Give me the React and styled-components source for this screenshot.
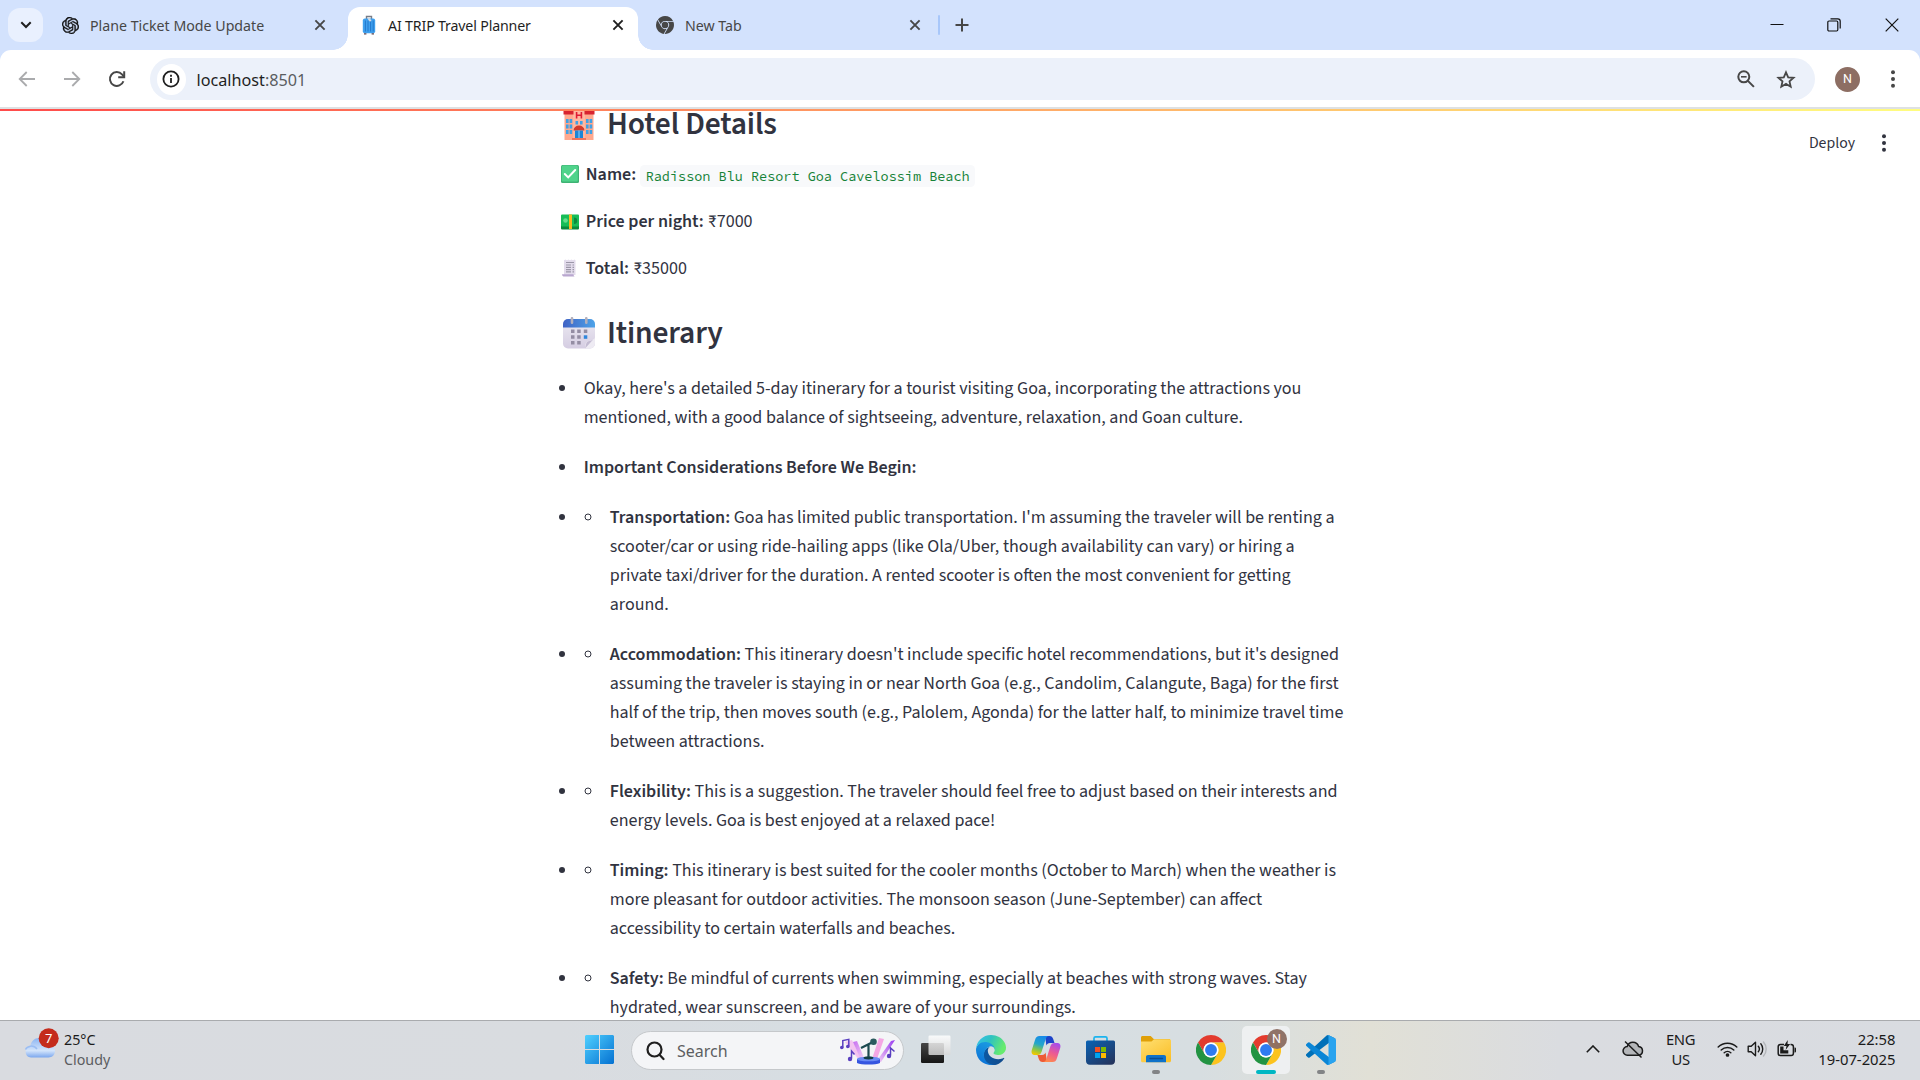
import React from "react";
import styled, { createGlobalStyle } from "styled-components";
import { SiOpenai, SiGooglechrome } from "react-icons/si";

const UI_FONT = '"Segoe UI", "Noto Sans", "Open Sans", sans-serif';
const PAGE_FONT = '"Source Sans 3", "Source Sans Pro", "Noto Sans CJK SC", sans-serif';
const CODE_FONT = '"Source Code Pro", "DejaVu Sans Mono", monospace';

const GlobalStyle = createGlobalStyle`
  * { box-sizing: border-box; }
  body { margin: 0; background: #fff; overflow: hidden; }
  svg { display: block; flex: none; }
`;

const Desktop = styled.div`
  display: flex;
  flex-direction: column;
  width: 1920px;
  height: 1080px;
  overflow: hidden;
  font-family: ${UI_FONT};
`;

/* ---------- browser window ---------- */

const TabStrip = styled.div`
  display: flex;
  flex: none;
  height: 50px;
  padding-left: 8px;
  background: #d3e2fd;
  color: #474747;
`;

const TabSearch = styled.div`
  display: grid;
  place-items: center;
  width: 35px;
  height: 34px;
  margin: 8px 5px 0 0;
  border-radius: 12px;
  background: #e9f0fe;
`;

const Tab = styled.div`
  position: relative;
  display: flex;
  align-items: center;
  width: ${(p) => p.$width}px;
  height: 43px;
  margin-top: 7px;
  padding: 0 ${(p) => p.$right}px 7px ${(p) => p.$left}px;
  border-radius: 12px 12px 0 0;
  background: ${(p) => (p.$active ? "#fff" : "transparent")};
  color: ${(p) => (p.$active ? "#1f1f1f" : "#474747")};

  &::before,
  &::after {
    content: "";
    display: ${(p) => (p.$active ? "block" : "none")};
    position: absolute;
    bottom: 0;
    width: 15px;
    height: 15px;
  }
  &::before {
    right: 100%;
    background: radial-gradient(circle at 0 0, transparent 14.5px, #fff 15px);
  }
  &::after {
    left: 100%;
    background: radial-gradient(circle at 100% 0, transparent 14.5px, #fff 15px);
  }
`;

const TabIcon = styled.span`
  display: grid;
  place-items: center;
  width: 20px;
  height: 20px;
  margin-right: ${(p) => p.$gap}px;
`;

const TabTitle = styled.span`
  flex: 1;
  padding-top: 1px;
  font-size: 14.2px;
  line-height: 20px;
  letter-spacing: ${(p) => p.$spacing || 0}px;
  white-space: nowrap;
`;

const TabDivider = styled.div`
  width: 2px;
  height: 20px;
  margin: 15px 14.5px 0 0;
  border-radius: 1px;
  background: #a8c7fa;
`;

const StripButton = styled.div`
  display: flex;
  align-items: center;
  height: 50px;
`;

const WindowControls = styled.div`
  display: flex;
  align-items: center;
  gap: 43.5px;
  height: 49px;
  margin-left: auto;
  padding-right: 21.5px;
`;

const ToolbarBack = styled.div`
  flex: none;
  background: #d3e2fd;
`;

const Toolbar = styled.div`
  display: flex;
  align-items: center;
  height: 59px;
  padding: 1px 18.5px 0 16px;
  border-bottom: 2px solid #dee1e3;
  border-radius: 11px 11px 0 0;
  background: #fff;
`;

const NavButton = styled.div`
  display: grid;
  place-items: center;
  width: 22px;
  height: 22px;
  margin-right: ${(p) => p.$gap}px;
`;

const AddressBar = styled.div`
  display: flex;
  align-items: center;
  flex: 1;
  height: 42px;
  padding: 0 19px 0 6.5px;
  border-radius: 21px;
  background: #ecf1fa;
`;

const SiteInfo = styled.div`
  display: grid;
  place-items: center;
  width: 29px;
  height: 31px;
  border-radius: 50%;
  background: #fff;
`;

const Url = styled.div`
  flex: 1;
  padding-top: 1px;
  margin-left: 11px;
  font-size: 16.2px;
  line-height: 22px;
  color: #1f1f1f;

  span { color: #5a5d61; }
`;

const AddressActions = styled.div`
  display: flex;
  align-items: center;
  gap: 21px;
`;

const ToolbarEnd = styled.div`
  display: flex;
  align-items: center;
  gap: 29.5px;
  margin: 0 6px 0 20px;
`;

const Avatar = styled.div`
  display: grid;
  place-items: center;
  width: ${(p) => p.$size}px;
  height: ${(p) => p.$size}px;
  border-radius: 50%;
  background: #8d6e63;
  color: #fff;
  font-family: Roboto, ${UI_FONT};
  font-size: 12.5px;
  line-height: 1;
`;

/* ---------- page ---------- */

const Page = styled.main`
  position: relative;
  flex: 1;
  overflow: hidden;
  background: #fff;
  color: #31333f;
  font-family: ${PAGE_FONT};
  font-size: 18px;
  line-height: 28.8px;
`;

const Decoration = styled.div`
  position: absolute;
  inset: 0 0 auto;
  height: 2px;
  background: linear-gradient(90deg, #ff4b4b, #fffd80);
`;

const AppHeader = styled.div`
  position: absolute;
  top: 20px;
  right: 33px;
  display: flex;
  align-items: center;
  gap: 26px;
  height: 28px;
  font-size: 15.75px;
`;

const Content = styled.div`
  width: 788.5px;
  margin-left: 557.6px;
`;

const Heading = styled.h2`
  display: flex;
  align-items: center;
  gap: 12px;
  margin: ${(p) => p.$margin};
  padding-left: 5.4px;
  font-size: 31.5px;
  font-weight: 600;
  line-height: 38px;
  letter-spacing: -0.16px;

  svg { margin-bottom: 2px; }
`;

const Detail = styled.p`
  display: flex;
  align-items: center;
  height: 28.8px;
  margin: 0 0 18px;
  padding-left: 3.4px;

  svg { margin: -2px 6.8px 0 0; }
  strong { margin-right: 4.1px; font-weight: 600; }
`;

const Code = styled.code`
  height: 22px;
  margin-top: 2px;
  padding: 0 5.4px;
  border-radius: 4.5px;
  background: #f8f9fb;
  color: #158237;
  font-family: ${CODE_FONT};
  font-size: 13.5px;
  line-height: 23px;
`;

const List = styled.ul`
  margin: 0;
  padding: 0;
  list-style: ${(p) => (p.$nested ? "circle" : "disc")};
`;

const Item = styled.li`
  margin: 0 0 ${(p) => (p.$nested ? 0 : 21.6)}px 20.7px;
  padding-left: 5.4px;

  strong { font-weight: 600; }
`;

/* ---------- taskbar ---------- */

const Taskbar = styled.footer`
  display: flex;
  flex: none;
  height: 60px;
  border-top: 1px solid #a9abae;
  background: linear-gradient(
    90deg,
    #d9dbe0 0,
    #d9dce0 560px,
    #d6dee3 900px,
    #d7dee1 1200px,
    #e1e0d6 1370px,
    #dadce0 1560px,
    #d9dce1 1920px
  );
`;

const Weather = styled.div`
  display: flex;
  width: 572px;
  padding: 9px 0 0 24px;
  font-size: 14.3px;
  line-height: 20px;
  color: #1b1b1b;

  svg { margin: -4px 5px 0 0; }
`;

const Muted = styled.div`
  color: #5c5d60;
`;

const Slot = styled.div`
  display: flex;
  flex-direction: column;
  align-items: center;
  justify-content: space-between;
  width: ${(p) => (p.$active ? 48 : 55)}px;
  height: 48px;
  margin: 5px ${(p) => (p.$active ? 3.5 : 0)}px 0;
  padding-top: 9px;
  border-radius: 5px;
  background: ${(p) => (p.$active ? "#eef0f1" : "transparent")};
`;

const IconStack = styled.div`
  position: relative;
`;

const Badge = styled.div`
  position: absolute;
  top: -6px;
  left: 16px;
  opacity: 0.96;
`;

const Indicator = styled.div`
  width: ${(p) => (p.$active ? 20 : 8)}px;
  height: 4px;
  border-radius: 2px;
  background: ${(p) => (p.$active ? "#00b7c3" : "#828486")};
`;

const SearchBox = styled.div`
  display: flex;
  align-items: center;
  width: 273px;
  height: 39px;
  margin: 10px 4px 0 4px;
  padding: 0 7px 0 14px;
  border: 1px solid #c5c8cb;
  border-radius: 20px;
  background: #f4f5f7;
  color: #5d5e61;
  font-size: 16px;
  line-height: 22px;

  span { flex: 1; margin-left: 12px; }
`;

const Tray = styled.div`
  display: flex;
  align-items: center;
  margin-left: auto;
  padding: 0 24.5px 4px 0;
  color: #1b1b1b;
  font-size: 14.8px;
  line-height: 20px;
`;

const TrayItem = styled.div`
  margin-left: ${(p) => p.$gap}px;
  text-align: ${(p) => p.$align || "center"};
  letter-spacing: ${(p) => p.$spacing || 0}px;
`;

/* ---------- icons ---------- */

const Cross = ({ color }) => (
  <svg width="12" height="12" viewBox="0 0 12 12" stroke={color} strokeWidth="1.9">
    <path d="M1.4 1.4l9.2 9.2M10.6 1.4l-9.2 9.2" />
  </svg>
);

const Dots = ({ color }) => (
  <svg width="6" height="20" viewBox="0 0 6 20" fill={color}>
    <circle cx="3" cy="3.2" r="2" />
    <circle cx="3" cy="10" r="2" />
    <circle cx="3" cy="16.8" r="2" />
  </svg>
);

const Arrow = ({ flip }) => (
  <svg width="18" height="18" viewBox="0 0 18 18" fill="none" stroke="#aaabad" strokeWidth="1.8">
    <path d={flip ? "M1 9h15M9.3 2l7 7-7 7" : "M17 9H2M8.7 2l-7 7 7 7"} />
  </svg>
);

const Reload = () => (
  <svg width="18" height="18" viewBox="0 0 18 18" fill="none" stroke="#474747" strokeWidth="2">
    <path d="M15.4 11.2A6.9 6.9 0 1 1 14 4.4l2 2.2" />
    <path d="M16.2 1.2v6h-6" />
  </svg>
);

const Luggage = () => (
  <svg width="14" height="20" viewBox="0 0 14 20">
    <path d="M4.5 5V1.500h5V5" fill="none" stroke="#777d88" strokeWidth="1.4" />
    <rect x=".8" y="3.6" width="12.4" height="14.6" rx="2" fill="#3fa0ee" />
    <path d="M3.4 5.5v11M6 5.5v11M8.6 5.5v11M11.2 5.500v11" stroke="#1b6fc4" strokeWidth=".8" />
    <path d="M6.5 2.6l3 2.6-1.4 1.6-2-2z" fill="#d9dce2" />
    <path d="M2 18.2h2.4v1.4H2zM9.6 18.2H12v1.4H9.6z" fill="#5a4550" />
  </svg>
);

const Hotel = () => (
  <svg width="32" height="34" viewBox="0 0 32 34">
    <rect x="1.5" y="5" width="29" height="28" fill="#ffa98f" />
    <rect x="10" y="1" width="12" height="32" fill="#ffb7a0" />
    <path d="M.5 4h10v3.4H.5zM21.5 4h10v3.4h-10z" fill="#d8242f" />
    <path d="M13.6 5v6.4M18.4 5v6.4M13.6 8.2h4.8" stroke="#e01b35" strokeWidth="1.6" />
    <g fill="#3fa2e6">
      <path d="M3 12h2.6v4H3zM6.6 12h2.6v4H6.6zM3 17.5h2.6v4H3zM6.6 17.5h2.6v4H6.6zM3 23h2.6v4H3zM6.6 23h2.6v4H6.6z" />
      <path d="M23 12h2.6v4H23zM26.6 12h2.6v4h-2.6zM23 17.5h2.6v4H23zM26.6 17.5h2.6v4h-2.6zM23 23h2.6v4H23zM26.6 23h2.6v4h-2.6z" />
      <path d="M12.5 14h2.6v3.5h-2.6zM17 14h2.6v3.5H17z" />
    </g>
    <path d="M10.5 23.5a5.5 5 0 0 1 11 0z" fill="#d23a2d" />
    <path d="M12 23.5h8V31h-8z" fill="#1d86d6" />
    <path d="M16 23.5V31" stroke="#8fd0ff" strokeWidth="1" />
    <path d="M9 31h14v2H9z" fill="#f0745c" />
  </svg>
);

const Check = () => (
  <svg width="18" height="18" viewBox="0 0 18 18">
    <rect width="18" height="18" rx="1.5" fill="#3fb374" />
    <rect x=".8" y=".5" width="16" height="16" rx="1.5" fill="#50d38b" />
    <path d="M3.8 9l3.4 3.4 7-7.4" fill="none" stroke="#fff" strokeWidth="2" strokeLinecap="round" />
  </svg>
);

const Cash = () => (
  <svg width="18" height="18" viewBox="0 0 18 18">
    <rect y="3.5" width="18" height="14" rx="1" fill="#0b8a3c" />
    <rect y="2.5" width="18" height="12" rx="1" fill="#18bd57" />
    <circle cx="4.5" cy="8.5" r="2.3" fill="#67dd8c" />
    <path d="M13 5.5a3.2 3.2 0 0 1 0 6.4z" fill="#0b8a3c" />
    <path d="M8 2.5h3V17H8z" fill="#f8b91f" />
  </svg>
);

const Receipt = () => (
  <svg width="18" height="18" viewBox="0 0 18 18">
    <path d="M3 1.2l1.5-.8 1.5.8 1.5-.8 1.5.8 1.5-.8 1.5.8 1.5-.8 1 .8V16H3z" fill="#e3dcec" />
    <path d="M1 15.2h11.5c0 1.5.8 2.4 2 2.4H3.5C2 17.6 1 16.8 1 15.2z" fill="#b9a7cf" />
    <path d="M5 3.5h8M5 6h5M11.5 6H13M5 8.3h5M11.5 8.3H13M5 10.6h5M11.5 10.6H13M5 12.9h5M11.5 12.9H13" stroke="#9c97a8" strokeWidth="1.2" />
  </svg>
);

const Calendar = () => (
  <svg width="32" height="32" viewBox="0 0 32 32">
    <defs>
      <linearGradient id="calTop"><stop stopColor="#3f62c4" /><stop offset="1" stopColor="#4ea3e8" /></linearGradient>
      <linearGradient id="calBody" x2="0" y2="1"><stop stopColor="#eceaf2" /><stop offset="1" stopColor="#d5cde2" /></linearGradient>
    </defs>
    <rect y="2.5" width="32" height="29" rx="5" fill="url(#calBody)" />
    <path d="M0 10.5V7a5 5 0 0 1 5-5h22a5 5 0 0 1 5 5v3.5z" fill="url(#calTop)" />
    <path d="M9 1.2v4.6M23.3 1.2v4.6" stroke="#b3b0bd" strokeWidth="2.6" strokeLinecap="round" />
    <path d="M8 12.5h3.5V16H8zM14.2 12.5h3.5V16h-3.5zM20.8 12.5h3.5V16h-3.5zM8 18.3h3.5v3.5H8zM14.2 18.3h3.5v3.5h-3.5zM8 24h3.5v3.5H8zM14.2 24h3.5v3.5h-3.5z" fill="#948da3" />
    <path d="M20.8 18.3h3.5v3.5h-3.5z" fill="#2f86dc" />
    <path d="M22 31.5c0-2 .5-5.5 1.5-6.5s6-1 8.5-4.5V26c0 3-2 5.5-5 5.5z" fill="#eeebf3" />
    <path d="M22 31.5c1-3 1-5.5 2-6.5s6-1 8-4.5z" fill="#c3bbd2" />
  </svg>
);

const WeatherIcon = () => (
  <svg width="35" height="32" viewBox="0 0 35 32">
    <defs>
      <linearGradient id="cloud" x2="0" y2="1"><stop stopColor="#8db5f2" /><stop offset=".65" stopColor="#d3e4fb" /><stop offset="1" stopColor="#7ba7ee" /></linearGradient>
    </defs>
    <path d="M7 31.5a5.8 5.8 0 0 1-.6-11.5C7 15.5 10.5 12 15 12c4.2 0 7.5 2.8 8.5 6.5 4.5 0 7.5 2.8 7.5 6.5s-2.8 6.5-6.5 6.5z" fill="url(#cloud)" />
    <path d="M1.5 23.5c1.5-3.8 8-5 11.5-.5" fill="none" stroke="#9bbdf3" strokeWidth="1.5" />
    <circle cx="24.7" cy="12.2" r="10" fill="#c42b1c" />
    <text x="24.7" y="17" textAnchor="middle" fontSize="13" fontFamily="Noto Sans" fill="#fff">7</text>
  </svg>
);

const StartIcon = () => (
  <svg width="29" height="29" viewBox="0 0 29 29">
    <defs>
      <linearGradient id="win" x2="1" y2="1"><stop stopColor="#4fd0ff" /><stop offset="1" stopColor="#0571d1" /></linearGradient>
    </defs>
    <path d="M1 0h13v14H0V1zM15 0h13l1 1v13H15zM0 15h14v14H1l-1-1zM15 15h14v13l-1 1H15z" fill="url(#win)" />
  </svg>
);

const Glass = () => (
  <svg width="19" height="20" viewBox="0 0 19 20" fill="none" stroke="#1f1f1f" strokeWidth="2.2" strokeLinecap="round">
    <circle cx="8.5" cy="8.5" r="7" />
    <path d="M13.5 13.8l4 4.2" />
  </svg>
);

const Karaoke = () => (
  <svg width="56" height="28" viewBox="0 0 56 28">
    <defs>
      <linearGradient id="beamL" x2="1" y2="1"><stop stopColor="#c66cf0" /><stop offset="1" stopColor="#f7dcf6" /></linearGradient>
      <linearGradient id="beamR" x1="1" x2="0" y2="1"><stop stopColor="#9a3df0" /><stop offset="1" stopColor="#f6d3f4" /></linearGradient>
    </defs>
    <path d="M12 3l10 20h-3L5 5z" fill="#f3c3f0" />
    <path d="M13 5l4-1 8 19h-4z" fill="url(#beamL)" />
    <path d="M39 1l5 1-8 23h-5z" fill="#f5a8e4" />
    <path d="M55 3L41 25h-5L51 4z" fill="url(#beamR)" />
    <path d="M17 22h23v4c-4 2-19 2-23 0z" fill="#3656e0" />
    <ellipse cx="28.5" cy="22" rx="11.5" ry="2.3" fill="#6b8cf5" />
    <ellipse cx="28.5" cy="20.8" rx="5" ry="1.6" fill="#123f45" />
    <path d="M28.5 20V8M21 11l11-5.5" stroke="#1c4a50" strokeWidth="2.2" />
    <circle cx="33.5" cy="4.8" r="3.3" fill="#2c5b5f" />
    <g fill="none" stroke="#5a3fc0" strokeWidth="1.5">
      <path d="M2.8 10.5v-7l6-1.200v7M11.5 21.5V14l3 3.5M50.5 18.5V11l4 3.5" />
    </g>
    <g fill="#5a3fc0">
      <circle cx="1.8" cy="10.5" r="1.8" /><circle cx="7.8" cy="9.5" r="1.8" />
      <circle cx="10" cy="22" r="2.2" /><circle cx="49" cy="19" r="2.2" />
    </g>
  </svg>
);

const TaskView = () => (
  <svg width="30" height="29" viewBox="0 0 30 29">
    <defs>
      <linearGradient id="tvDark" x2="0" y2="1"><stop stopColor="#454545" /><stop offset="1" stopColor="#161616" /></linearGradient>
      <linearGradient id="tvLight" x2="0" y2="1"><stop stopColor="#fff" /><stop offset="1" stopColor="#d8d8d8" /></linearGradient>
    </defs>
    <rect y="8" width="23" height="20" rx="1.2" fill="url(#tvDark)" />
    <rect x="7.5" y=".5" width="22" height="19.5" rx="1.2" fill="url(#tvLight)" opacity=".84" />
  </svg>
);

const Edge = () => (
  <svg width="30" height="30" viewBox="0 0 256 256">
    <defs>
      <linearGradient id="edgeA" x1="0" x2="1"><stop stopColor="#0c59a4" /><stop offset="1" stopColor="#114a8b" /></linearGradient>
      <linearGradient id="edgeB" x1=".6" x2=".2" y2="1"><stop stopColor="#1b9de2" /><stop offset="1" stopColor="#0a6fd6" /></linearGradient>
      <linearGradient id="edgeC" x1="0" x2="1" y2=".35"><stop stopColor="#35c1f1" /><stop offset=".5" stopColor="#2fc2c0" /><stop offset="1" stopColor="#66eb6e" /></linearGradient>
    </defs>
    <path fill="url(#edgeA)" d="M235.7 195.5a93.7 93.7 0 0 1-10.6 4.7 101.9 101.9 0 0 1-35.9 6.4c-47.3 0-88.5-32.5-88.5-74.3a31.5 31.5 0 0 1 16.4-27.3c-42.8 1.8-53.8 46.4-53.8 72.5 0 74 68.1 81.4 82.8 81.4 7.9 0 19.8-2.3 27-4.6l1.3-.4a128.3 128.3 0 0 0 66.6-52.8 4 4 0 0 0-5.3-5.6z" />
    <path fill="url(#edgeB)" d="M105.7 241.4a79.2 79.2 0 0 1-22.7-21.3 80.7 80.7 0 0 1 29.5-120c3.2-1.5 8.5-4.1 15.6-4a32.4 32.4 0 0 1 25.7 13 31.9 31.9 0 0 1 6.3 18.7c0-.2 24.5-79.6-80-79.6-43.9 0-80 41.6-80 78.2a130.2 130.2 0 0 0 12.1 56 128 128 0 0 0 156.4 67 75.5 75.5 0 0 1-62.8-8z" />
    <path fill="url(#edgeC)" d="M152.3 148.9c-.8 1-3.3 2.5-3.3 5.7 0 2.6 1.7 5.1 4.7 7.2 14.4 10 41.5 8.7 41.6 8.7 10.7 0 21.1-3 30.3-8.4A61.4 61.4 0 0 0 256 109.3c.3-22.4-8-37.3-11.3-43.9C223.5 23.9 177.7 0 128 0A128 128 0 0 0 0 126.2c.5-36.5 36.8-66 80-66 3.5 0 23.5.3 42 10 16.3 8.6 24.9 19 30.8 29.2 6.2 10.7 7.3 24.1 7.3 29.5 0 5.3-2.7 13.3-7.8 20z" />
  </svg>
);

const Copilot = () => (
  <svg width="30" height="28" viewBox="0 0 30 28">
    <defs>
      <linearGradient id="copA" x1=".6" x2=".3" y2="1"><stop stopColor="#1689ea" /><stop offset=".45" stopColor="#24a7c9" /><stop offset=".75" stopColor="#8bc646" /><stop offset="1" stopColor="#f2c800" /></linearGradient>
      <linearGradient id="copB" x1=".7" x2=".3" y2="1"><stop stopColor="#a64bea" /><stop offset=".5" stopColor="#ec5a93" /><stop offset="1" stopColor="#ff8b4c" /></linearGradient>
    </defs>
    <path d="M14 1h4.5c2 0 3 1 3.7 3l1.3 4H19c-2 0-3 1-3.6 2.5z" fill="#1c43c9" />
    <path d="M16 27h-4.5c-2 0-3-1-3.7-3l-1.3-4H11c2 0 3-1 3.6-2.5z" fill="#ee5b35" />
    <path d="M8.5 1H18c-2 0-2.8 1.5-3.5 3.5l-3.8 12C10 19 8.5 20 6.5 20H3.8C1 20 0 17.8.8 15L4 5C5 2 6 1 8.5 1z" fill="url(#copA)" />
    <path d="M21.5 27H12c2 0 2.8-1.5 3.5-3.5l3.8-12C20 9 21.5 8 23.5 8h2.7c2.8 0 3.8 2.2 3 5L26 23c-1 3-2 4-4.5 4z" fill="url(#copB)" />
  </svg>
);

const Store = () => (
  <svg width="29" height="30" viewBox="0 0 29 30">
    <defs>
      <linearGradient id="store" x2=".8" y2="1"><stop stopColor="#0a63b5" /><stop offset="1" stopColor="#24355f" /></linearGradient>
    </defs>
    <path d="M8 6V3.2C8 2.3 8.6 1.8 9.5 1.8h10c.9 0 1.5.5 1.5 1.4V6" fill="none" stroke="#1cb4ee" strokeWidth="1.7" />
    <path d="M0 7a1.5 1.5 0 0 1 1.5-1.5h26A1.5 1.5 0 0 1 29 7v19c0 2.2-1.6 3.8-3.8 3.8H3.8C1.6 29.8 0 28.2 0 26z" fill="url(#store)" />
    <path d="M9 12h5v5H9z" fill="#f25022" /><path d="M15 12h5v5h-5z" fill="#7fba00" />
    <path d="M9 18h5v5H9z" fill="#00a4ef" /><path d="M15 18h5v5h-5z" fill="#ffb900" />
  </svg>
);

const Explorer = () => (
  <svg width="30" height="28" viewBox="0 0 30 28">
    <defs>
      <linearGradient id="folder" x2=".8" y2="1"><stop stopColor="#ffdf72" /><stop offset="1" stopColor="#fbc02a" /></linearGradient>
    </defs>
    <path d="M0 2.5C0 1.7.6 1 1.5 1h8.2l3 3H29v7H0z" fill="#e0a008" />
    <path d="M0 6.5h10.5L13 4.3h15.5c.9 0 1.5.6 1.5 1.5v20c0 .9-.6 1.5-1.5 1.5h-27c-.9 0-1.5-.6-1.5-1.5z" fill="url(#folder)" />
    <path d="M5 27.3V22c0-1.3.8-2 2-2h16c1.2 0 2 .7 2 2v5.3z" fill="#0f72c9" />
    <path d="M9 23.5h12.5" stroke="#0a4e93" strokeWidth="1.4" strokeLinecap="round" />
  </svg>
);

const Chrome = () => (
  <svg width="30" height="30" viewBox="0 0 48 48">
    <path fill="#e33b2e" d="M24 12h20.781A23.994 23.994 0 0 0 3.218 12.003L13.608 30A11.985 11.985 0 0 1 24 12z" />
    <path fill="#fcc31e" d="M34.391 30.003L24 48a23.994 23.994 0 0 0 20.78-35.997H24a11.985 11.985 0 0 1 10.391 18z" />
    <path fill="#229342" d="M13.609 30.003L3.218 12.006A23.994 23.994 0 0 0 24.003 48l10.39-17.997a11.985 11.985 0 0 1-20.784 0z" />
    <circle cx="24" cy="24" r="12" fill="#fff" />
    <circle cx="24" cy="24" r="9.5" fill="#2f7bf0" />
  </svg>
);

const VsCode = () => (
  <svg width="30" height="30" viewBox="0 0 100 100">
    <path fill="#0070b8" d="M96.46 10.8L75.86.88a6.23 6.23 0 0 0-7.11 1.2L1.3 63.58a4.17 4.17 0 0 0 0 6.17l5.51 5a4.17 4.17 0 0 0 5.32.24L93.36 13.37C96.09 11.3 100 13.25 100 16.67v-.24a6.25 6.25 0 0 0-3.54-5.63z" />
    <path fill="#0b86d6" d="M96.46 89.2l-20.6 9.92a6.23 6.23 0 0 1-7.11-1.2L1.3 36.42a4.17 4.17 0 0 1 0-6.17l5.51-5a4.17 4.17 0 0 1 5.32-.24l81.23 61.62c2.73 2.07 6.64.12 6.64-3.3v.24a6.25 6.25 0 0 1-3.54 5.63z" />
    <path fill="#29a3ef" d="M75.86 99.13a6.23 6.23 0 0 1-7.11-1.21c2.31 2.3 6.25.67 6.25-2.59V4.67c0-3.26-3.94-4.89-6.25-2.59A6.23 6.23 0 0 1 75.86.87l20.6 9.91A6.25 6.25 0 0 1 100 16.41v67.18a6.25 6.25 0 0 1-3.54 5.63z" />
  </svg>
);

const CloudOff = () => (
  <svg width="22" height="20" viewBox="0 0 22 20" fill="none" stroke="#1b1b1b" strokeWidth="1.5">
    <path d="M5.5 16.2a4.3 4.3 0 0 1-.3-8.6A6 6 0 0 1 16.6 7.4a4.45 4.45 0 0 1 .2 8.8z" fill="#b4b6b9" />
    <path d="M3 2.5l16.5 16" />
  </svg>
);

const Wifi = () => (
  <svg width="21" height="16" viewBox="0 0 21 16" fill="none" stroke="#1b1b1b" strokeWidth="1.5" strokeLinecap="round">
    <path d="M1.2 6a13.2 13.2 0 0 1 18.6 0M4.2 9a9 9 0 0 1 12.6 0M7.2 11.8a4.8 4.8 0 0 1 6.6 0" />
    <circle cx="10.5" cy="14" r="1.1" fill="#1b1b1b" />
  </svg>
);

const Speaker = () => (
  <svg width="21" height="18" viewBox="0 0 21 18" fill="none" stroke="#1b1b1b" strokeWidth="1.4" strokeLinecap="round" strokeLinejoin="round">
    <path d="M1.2 6.3h3l4.3-4v13.4l-4.3-4h-3z" />
    <path d="M11.3 6.2a4.5 4.5 0 0 1 0 5.6M13.8 3.8a8 8 0 0 1 0 10.4" />
    <path d="M16.5 2a10.5 10.5 0 0 1 0 14" stroke="#b4b6ba" />
  </svg>
);

const Battery = () => (
  <svg width="20" height="18" viewBox="0 0 20 18">
    <path d="M7 4.5H3.5a2.3 2.3 0 0 0-2.3 2.3v6.4a2.3 2.3 0 0 0 2.3 2.3h10.6a2.3 2.3 0 0 0 2.3-2.3V6.8a2.3 2.3 0 0 0-2.3-2.3h-.6" fill="none" stroke="#1b1b1b" strokeWidth="1.5" />
    <path d="M3.2 6.6h3.3v3.6h4.8v3.2H3.2zM17.5 7.5c1 0 1.5.4 1.5 1.2v2.6c0 .8-.5 1.2-1.5 1.2z" fill="#1b1b1b" />
    <path d="M10.8 0l-4 6h2.7l-.9 4 4.6-6h-2.7z" fill="#1b1b1b" />
  </svg>
);

/* ---------- content ---------- */

const considerations = [
  ["Transportation:", "Goa has limited public transportation. I'm assuming the traveler will be renting a scooter/car or using ride-hailing apps (like Ola/Uber, though availability can vary) or hiring a private taxi/driver for the duration. A rented scooter is often the most convenient for getting around."],
  ["Accommodation:", "This itinerary doesn't include specific hotel recommendations, but it's designed assuming the traveler is staying in or near North Goa (e.g., Candolim, Calangute, Baga) for the first half of the trip, then moves south (e.g., Palolem, Agonda) for the latter half, to minimize travel time between attractions."],
  ["Flexibility:", "This is a suggestion. The traveler should feel free to adjust based on their interests and energy levels. Goa is best enjoyed at a relaxed pace!"],
  ["Timing:", "This itinerary is best suited for the cooler months (October to March) when the weather is more pleasant for outdoor activities. The monsoon season (June-September) can affect accessibility to certain waterfalls and beaches."],
  ["Safety:", "Be mindful of currents when swimming, especially at beaches with strong waves. Stay hydrated, wear sunscreen, and be aware of your surroundings."],
];

const apps = [
  { Icon: TaskView },
  { Icon: Edge },
  { Icon: Copilot },
  { Icon: Store },
  { Icon: Explorer, running: true },
  { Icon: Chrome },
  { Icon: Chrome, active: true },
  { Icon: VsCode, running: true },
];

function BrowserChrome() {
  return (
    <>
      <TabStrip>
        <TabSearch>
          <svg width="12" height="8" viewBox="0 0 12 8" fill="none" stroke="#1f1f1f" strokeWidth="2">
            <path d="M1.3 1.3L6 6l4.7-4.7" />
          </svg>
        </TabSearch>
        <Tab $width={300} $left={12} $right={22}>
          <TabIcon $gap={10}><SiOpenai size={17} color="#111" stroke="#111" strokeWidth={0.5} /></TabIcon>
          <TabTitle>Plane Ticket Mode Update</TabTitle>
          <Cross color="#474747" />
        </Tab>
        <Tab $active $width={289.5} $left={11} $right={14}>
          <TabIcon $gap={9}><Luggage /></TabIcon>
          <TabTitle $spacing={-0.16}>AI TRIP Travel Planner</TabTitle>
          <Cross color="#1f1f1f" />
        </Tab>
        <Tab $width={300.5} $left={17.5} $right={17}>
          <TabIcon $gap={10}><SiGooglechrome size={18} /></TabIcon>
          <TabTitle>New Tab</TabTitle>
          <Cross color="#474747" />
        </Tab>
        <TabDivider />
        <StripButton>
          <svg width="14" height="14" viewBox="0 0 14 14" stroke="#474747" strokeWidth="2">
            <path d="M7 .5v13M.5 7h13" />
          </svg>
        </StripButton>
        <WindowControls>
          <svg width="14" height="14" viewBox="0 0 14 14" stroke="#111" strokeWidth="1"><path d="M.5 6.5h13" /></svg>
          <svg width="14" height="14" viewBox="0 0 14 14" fill="none" stroke="#111" strokeWidth="1.2">
            <rect x=".8" y="3" width="10" height="10" rx="1.2" />
            <path d="M3.5.8h7.3a2.4 2.4 0 0 1 2.4 2.4v7.3" />
          </svg>
          <svg width="14" height="14" viewBox="0 0 14 14" stroke="#111" strokeWidth="1.2"><path d="M.7.7l12.6 12.6M13.3.7L.7 13.3" /></svg>
        </WindowControls>
      </TabStrip>
      <ToolbarBack>
        <Toolbar>
          <NavButton $gap={23}><Arrow /></NavButton>
          <NavButton $gap={23}><Arrow flip /></NavButton>
          <NavButton $gap={22}><Reload /></NavButton>
          <AddressBar>
            <SiteInfo>
              <svg width="18" height="18" viewBox="0 0 18 18" fill="none" stroke="#1f1f1f" strokeWidth="1.8">
                <circle cx="9" cy="9" r="7.6" />
                <path d="M9 8v5M9 4.8v1.9" />
              </svg>
            </SiteInfo>
            <Url>localhost<span>:8501</span></Url>
            <AddressActions>
              <svg width="18" height="18" viewBox="0 0 18 18" fill="none" stroke="#474747" strokeWidth="2">
                <circle cx="6.8" cy="6.8" r="5.5" />
                <path d="M10.9 10.9l6 6" />
                <path d="M4 6.8h5.6" strokeWidth="1.6" />
              </svg>
              <svg width="20" height="19" viewBox="0 0 20 19" fill="none" stroke="#474747" strokeWidth="1.8">
                <path d="M10 2.3l2.2 5 5.4.5-4.1 3.6 1.2 5.3L10 13.9l-4.7 2.8 1.2-5.3-4.1-3.6 5.4-.5z" />
              </svg>
            </AddressActions>
          </AddressBar>
          <ToolbarEnd>
            <Avatar $size={25}>N</Avatar>
            <Dots color="#474747" />
          </ToolbarEnd>
        </Toolbar>
      </ToolbarBack>
    </>
  );
}

export default function App() {
  return (
    <Desktop>
      <GlobalStyle />
      <BrowserChrome />
      <Page>
        <Content>
          <Heading $margin="-3px 0 17px"><Hotel />Hotel Details</Heading>
          <Detail><Check /><strong>Name:</strong><Code>Radisson Blu Resort Goa Cavelossim Beach</Code></Detail>
          <Detail><Cash /><strong>Price per night:</strong>₹7000</Detail>
          <Detail><Receipt /><strong>Total:</strong>₹35000</Detail>
          <Heading $margin="31.5px 0 21.9px"><Calendar />Itinerary</Heading>
          <List>
            <Item>Okay, here's a detailed 5-day itinerary for a tourist visiting Goa, incorporating the attractions you mentioned, with a good balance of sightseeing, adventure, relaxation, and Goan culture.</Item>
            <Item><strong>Important Considerations Before We Begin:</strong></Item>
            {considerations.map(([title, text]) => (
              <Item key={title}>
                <List $nested>
                  <Item $nested><strong>{title}</strong> {text}</Item>
                </List>
              </Item>
            ))}
          </List>
        </Content>
        <AppHeader>Deploy<Dots color="#31333f" /></AppHeader>
        <Decoration />
      </Page>
      <Taskbar>
        <Weather>
          <WeatherIcon />
          <div>25°C<Muted>Cloudy</Muted></div>
        </Weather>
        <Slot><StartIcon /></Slot>
        <SearchBox><Glass /><span>Search</span><Karaoke /></SearchBox>
        {apps.map(({ Icon, running, active }, i) => (
          <Slot key={i} $active={active}>
            <IconStack>
              <Icon />
              {active && <Badge><Avatar $size={20}>N</Avatar></Badge>}
            </IconStack>
            {(running || active) && <Indicator $active={active} />}
          </Slot>
        ))}
        <Tray>
          <svg width="14" height="8" viewBox="0 0 14 8" fill="none" stroke="#1b1b1b" strokeWidth="1.6"><path d="M.8 7.2L7 1l6.2 6.2" /></svg>
          <TrayItem $gap={22}><CloudOff /></TrayItem>
          <TrayItem $gap={22} $spacing={-0.3}>ENG<br />US</TrayItem>
          <TrayItem $gap={22}><Wifi /></TrayItem>
          <TrayItem $gap={9}><Speaker /></TrayItem>
          <TrayItem $gap={9}><Battery /></TrayItem>
          <TrayItem $gap={21} $align="right">22:58<br />19-07-2025</TrayItem>
        </Tray>
      </Taskbar>
    </Desktop>
  );
}
